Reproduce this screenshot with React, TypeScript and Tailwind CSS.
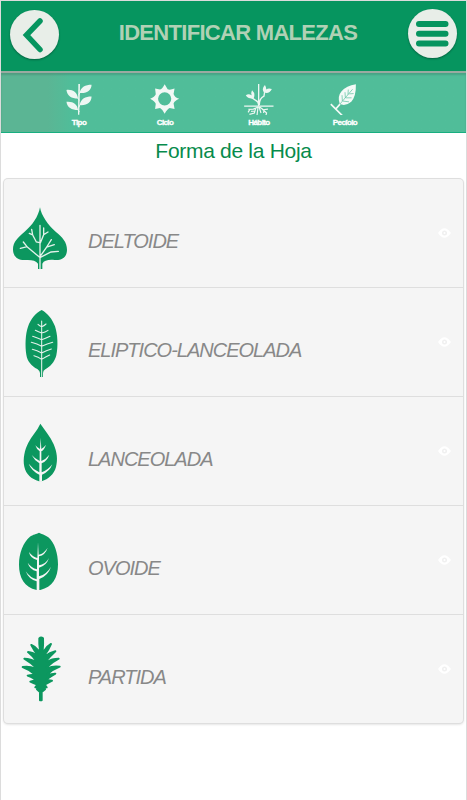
import type { ReactNode } from 'react'

type Leaf = {
  name: string
  viewBox: string
  art: ReactNode
}

const veins = {
  fill: 'none',
  stroke: '#e3f1ea',
  strokeWidth: 4,
  strokeLinecap: 'round' as const,
}

const leaves: Leaf[] = [
  {
    name: 'DELTOIDE',
    viewBox: '12 -48 246 324',
    art: (
      <>
        <path d="M120 37C124 62 144 90 167 110C187 126 201 141 201 164C201 187 185 197 164 195C146 193 132 196 127 206V222H114V206C108 197 94 194 78 195C54 197 39 185 39 163C39 141 54 127 73 111C97 91 115 65 120 37Z" />
        <path
          {...veins}
          d="M120 91V222M119 143L109 141L98 120L88 115M98 120L95 103M121 144L131 119L144 111M131 119V99M119 187L81 155L61 160M81 155L70 141M122 182L140 156L163 149M140 156L154 134M121 187L153 171L175 169"
        />
      </>
    ),
  },
  {
    name: 'ELIPTICO-LANCEOLADA',
    viewBox: '12 -36 246 324',
    art: (
      <>
        <path d="M125 30C143 40 157 57 165 79C173 103 175 139 169 166C164 187 149 201 136 208Q129 212 129 219V231H120V219Q120 213 112 207C95 198 82 184 79 164C75 137 76 103 84 80C92 57 107 38 125 30Z" />
        <path
          {...veins}
          strokeWidth={3.2}
          d="M125 63V231M114 73Q119 78 125 80Q132 78 138 72M106 91Q116 96 125 99Q136 97 144 91M98 109Q113 114 125 119Q139 114 150 109M94 127Q112 132 125 139Q142 131 158 127M97 148Q111 151 125 159Q139 151 154 147M102 167Q115 170 125 178Q137 170 149 165"
        />
      </>
    ),
  },
  {
    name: 'LANCEOLADA',
    viewBox: '12 -39 246 324',
    art: (
      <>
        <path d="M121 41C135 62 151 79 161 103C171 127 174 148 168 171C162 193 145 207 125 214H117C94 206 78 193 73 170C68 146 74 119 85 98C95 78 111 63 121 41Z" />
        <path
          fill="#f5f5f5"
          d="M122 83L124 117Q132 112 138 104Q133 119 124 124V153Q138 147 148 134Q142 152 125 160V187Q143 181 157 163Q149 185 126 194V215H118V194Q95 183 86 161Q99 178 118 187V160Q103 151 95 135Q105 146 119 153V124Q110 119 106 106Q112 113 120 117Z"
        />
      </>
    ),
  },
  {
    name: 'OVOIDE',
    viewBox: '12 -42 246 324',
    art: (
      <>
        <path d="M117 38C125 43 134 43 145 52C164 68 174 101 174 133C174 174 157 202 121 210H110C73 202 57 173 57 134C57 99 70 67 89 51C100 42 109 43 117 38Z" />
        <path
          fill="#f5f5f5"
          d="M114 67L116 104Q132 101 143 83Q136 105 117 109V136Q136 134 147 114Q139 138 117 143V169Q140 163 153 140Q145 166 118 177V211H110V184Q87 179 77 154Q91 174 110 178V154Q89 149 83 128Q94 144 111 148V120Q90 114 87 96Q98 111 112 114Z"
        />
      </>
    ),
  },
  {
    name: 'PARTIDA',
    viewBox: '12 -30 246 324',
    art: (
      <path
        stroke="#0c975f"
        strokeWidth="6"
        strokeLinejoin="round"
        d="M118 40Q123 35 129 40Q130 58 128 76L132 78Q142 63 153 57Q147 73 133 91L136 93Q149 83 166 79Q152 92 138 108L140 111Q156 101 176 101Q158 110 140 127L142 130Q159 122 179 125Q160 132 142 148L143 151Q153 147 166 146Q154 153 139 163L141 166Q148 165 156 167Q148 171 134 179L140 187L132 188L135 193L125 201V226H120V201L111 193L114 188L106 187L112 179Q100 174 91 170L104 166L106 163Q94 156 83 152Q96 148 104 151V148Q90 134 68 126Q88 123 105 130L107 127Q93 113 73 101Q93 101 108 111L109 108Q98 92 84 81Q100 82 112 93L114 91Q102 76 94 60Q107 65 117 78L120 76Q117 58 118 40Z"
      />
    ),
  },
]

function TipoIcon() {
  return (
    <svg viewBox="0 0 90 100" className="h-[33px] w-[30px]" fill="#eef7f3">
      <path d="M43 6H48L46 99H42Z" />
      <path d="M47 33C51 14 64 8 83 8C83 24 70 35 47 33ZM47 70C51 50 64 44 83 44C83 61 70 72 47 70ZM42 50C22 50 9 42 7 24C27 22 40 32 42 50ZM42 85C23 85 9 78 7 60C27 58 41 68 42 85Z" />
      <path d="M44 39L49 31M44 77L49 68M41 48L46 56M41 83L46 91" stroke="#eef7f3" strokeWidth="3" />
    </svg>
  )
}

function CicloIcon() {
  return (
    <svg viewBox="0 0 90 100" className="h-[33px] w-[30px]" fill="#f2f8f5">
      <path
        fillRule="evenodd"
        d="M44 7L53 22Q60 25 74 20L71 36Q74 46 88 51Q74 57 71 65L74 82L59 79Q52 82 44 96Q37 82 30 79L15 82L17 66Q14 58 0 51Q14 45 17 37L15 20L30 23Q37 21 44 7ZM44 31A20 20 0 1 0 44 71A20 20 0 1 0 44 31Z"
      />
    </svg>
  )
}

function HabitoIcon() {
  return (
    <svg viewBox="0 0 90 100" className="h-[33px] w-[30px]" fill="none" stroke="#eef7f3" strokeWidth="4">
      <path d="M44 6V75M44 70Q44 60 34 55L22 47M46 70Q46 49 60 43L62 31M0 73H89" />
      <path
        fill="#eef7f3"
        stroke="none"
        d="M5 40Q19 32 30 49Q13 53 5 40ZM24 25Q35 35 29 49Q17 39 24 25ZM61 33Q51 21 63 9Q72 25 61 33ZM61 32Q67 15 84 21Q76 37 61 32Z"
      />
      <path
        strokeWidth="3.5"
        d="M44 75L28 82L13 83M35 79L31 94L16 98M42 76L39 101M45 75L51 94M46 75L58 84L72 82M54 81L68 94L66 101M17 83L12 92M32 88L21 89M60 85L59 94"
      />
    </svg>
  )
}

function PecioloIcon() {
  return (
    <svg viewBox="0 0 90 100" className="h-[33px] w-[30px]" fill="none">
      <path d="M78 7Q79 43 64 60Q48 74 29 67Q21 44 34 29Q49 11 78 7Z" fill="#f4faf7" />
      <path
        d="M27 70L68 22M37 58L36 40M46 48L45 31M54 38L55 23M39 58L57 60M48 48L65 48M58 36L71 35"
        stroke="#50bd99"
        strokeWidth="2"
      />
      <path d="M2 67L37 102M17 82L30 67" stroke="#f4faf7" strokeWidth="5" />
    </svg>
  )
}

function Step({ label, className, children }: { label: string; className: string; children: ReactNode }) {
  return (
    <div className={`flex shrink-0 flex-col items-center ${className}`}>
      {children}
      <span className="mt-[3px] text-[8px] leading-[10px] font-bold tracking-[-0.6px] text-white [-webkit-text-stroke:0.3px_white]">
        {label}
      </span>
    </div>
  )
}

function EyeIcon() {
  return (
    <svg viewBox="0 0 39 30" className="h-[10px] w-[13px]">
      <path d="M0 15Q19-14 39 15Q19 44 0 15Z" fill="#fff" />
      <circle cx="19.5" cy="15" r="7.5" fill="#f0f0f0" />
      <circle cx="19.5" cy="15" r="3" fill="#fff" />
    </svg>
  )
}

function LeafRow({ leaf }: { leaf: Leaf }) {
  return (
    <li className="flex h-[109px] items-center border-b border-[#dedede] pr-[12px] last:h-[108px] last:border-b-0">
      <svg viewBox={leaf.viewBox} className="h-[108px] w-[82px] shrink-0" fill="#0c975f">
        {leaf.art}
      </svg>
      <span className="mt-[16px] ml-[2px] flex-1 text-[20px] leading-6 tracking-[-1px] text-[#888] italic">
        {leaf.name}
      </span>
      <EyeIcon />
    </li>
  )
}

export default function App() {
  return (
    <div className="h-[800px] w-[467px] overflow-hidden border-x border-t border-[#dcdcdc] bg-white font-['Liberation_Sans',Arial,sans-serif]">
      {/* Header */}
      <header className="flex h-[72px] items-start justify-between border-b-2 border-[#9aaaa1] bg-[#06955f] pr-[9px] pl-[9px]">
        <button className="mt-[9px] size-[49px] rounded-full bg-[#e8eee8] shadow-[0_1px_2px_#0005]">
          <svg viewBox="0 0 49 49" className="size-full">
            <path
              d="M30 11L16.500 25L30 39.500"
              fill="none"
              stroke="#06955f"
              strokeWidth="5.500"
              strokeLinecap="round"
            />
          </svg>
        </button>
        <h1 className="mt-[18px] ml-[9px] text-[22px] leading-7 font-bold tracking-[-0.7px] whitespace-nowrap text-[#b0d1b5]">
          IDENTIFICAR MALEZAS
        </h1>
        <button className="mt-[8px] size-[49px] rounded-full bg-[#e8eee8] shadow-[0_1px_2px_#0005]">
          <svg viewBox="0 0 49 49" className="size-full">
            <path
              d="M11 15H37.500M11 24.700H37.500M11 34.500H37.500"
              stroke="#06955f"
              strokeWidth="6"
              strokeLinecap="round"
            />
          </svg>
        </button>
      </header>

      {/* Steps */}
      <nav className="flex h-[60px] border-b border-[#18af80] bg-linear-to-r from-[#5bb594] from-10% to-[#50bd99] to-15% pt-[9px] pl-[63px] shadow-[inset_0_2px_2px_#0002]">
        <Step label="Tipo" className="w-[30px]">
          <TipoIcon />
        </Step>
        <Step label="Ciclo" className="ml-[56px] w-[30px]">
          <CicloIcon />
        </Step>
        <Step label="Hábito" className="ml-[64px] w-[30px]">
          <HabitoIcon />
        </Step>
        <Step label="Pecíolo" className="ml-[56px] w-[30px]">
          <PecioloIcon />
        </Step>
      </nav>

      <h2 className="mt-[6px] text-center text-[21px] leading-6 tracking-[-0.3px] text-[#078b4c]">Forma de la Hoja</h2>

      {/* Leaf shapes */}
      <ul className="mx-[3px] mt-[16px] rounded-[4px] bg-[#f5f5f5] shadow-[0_0_0_1px_#dedede,0_1px_3px_#0003]">
        {leaves.map((leaf) => (
          <LeafRow key={leaf.name} leaf={leaf} />
        ))}
      </ul>
    </div>
  )
}
